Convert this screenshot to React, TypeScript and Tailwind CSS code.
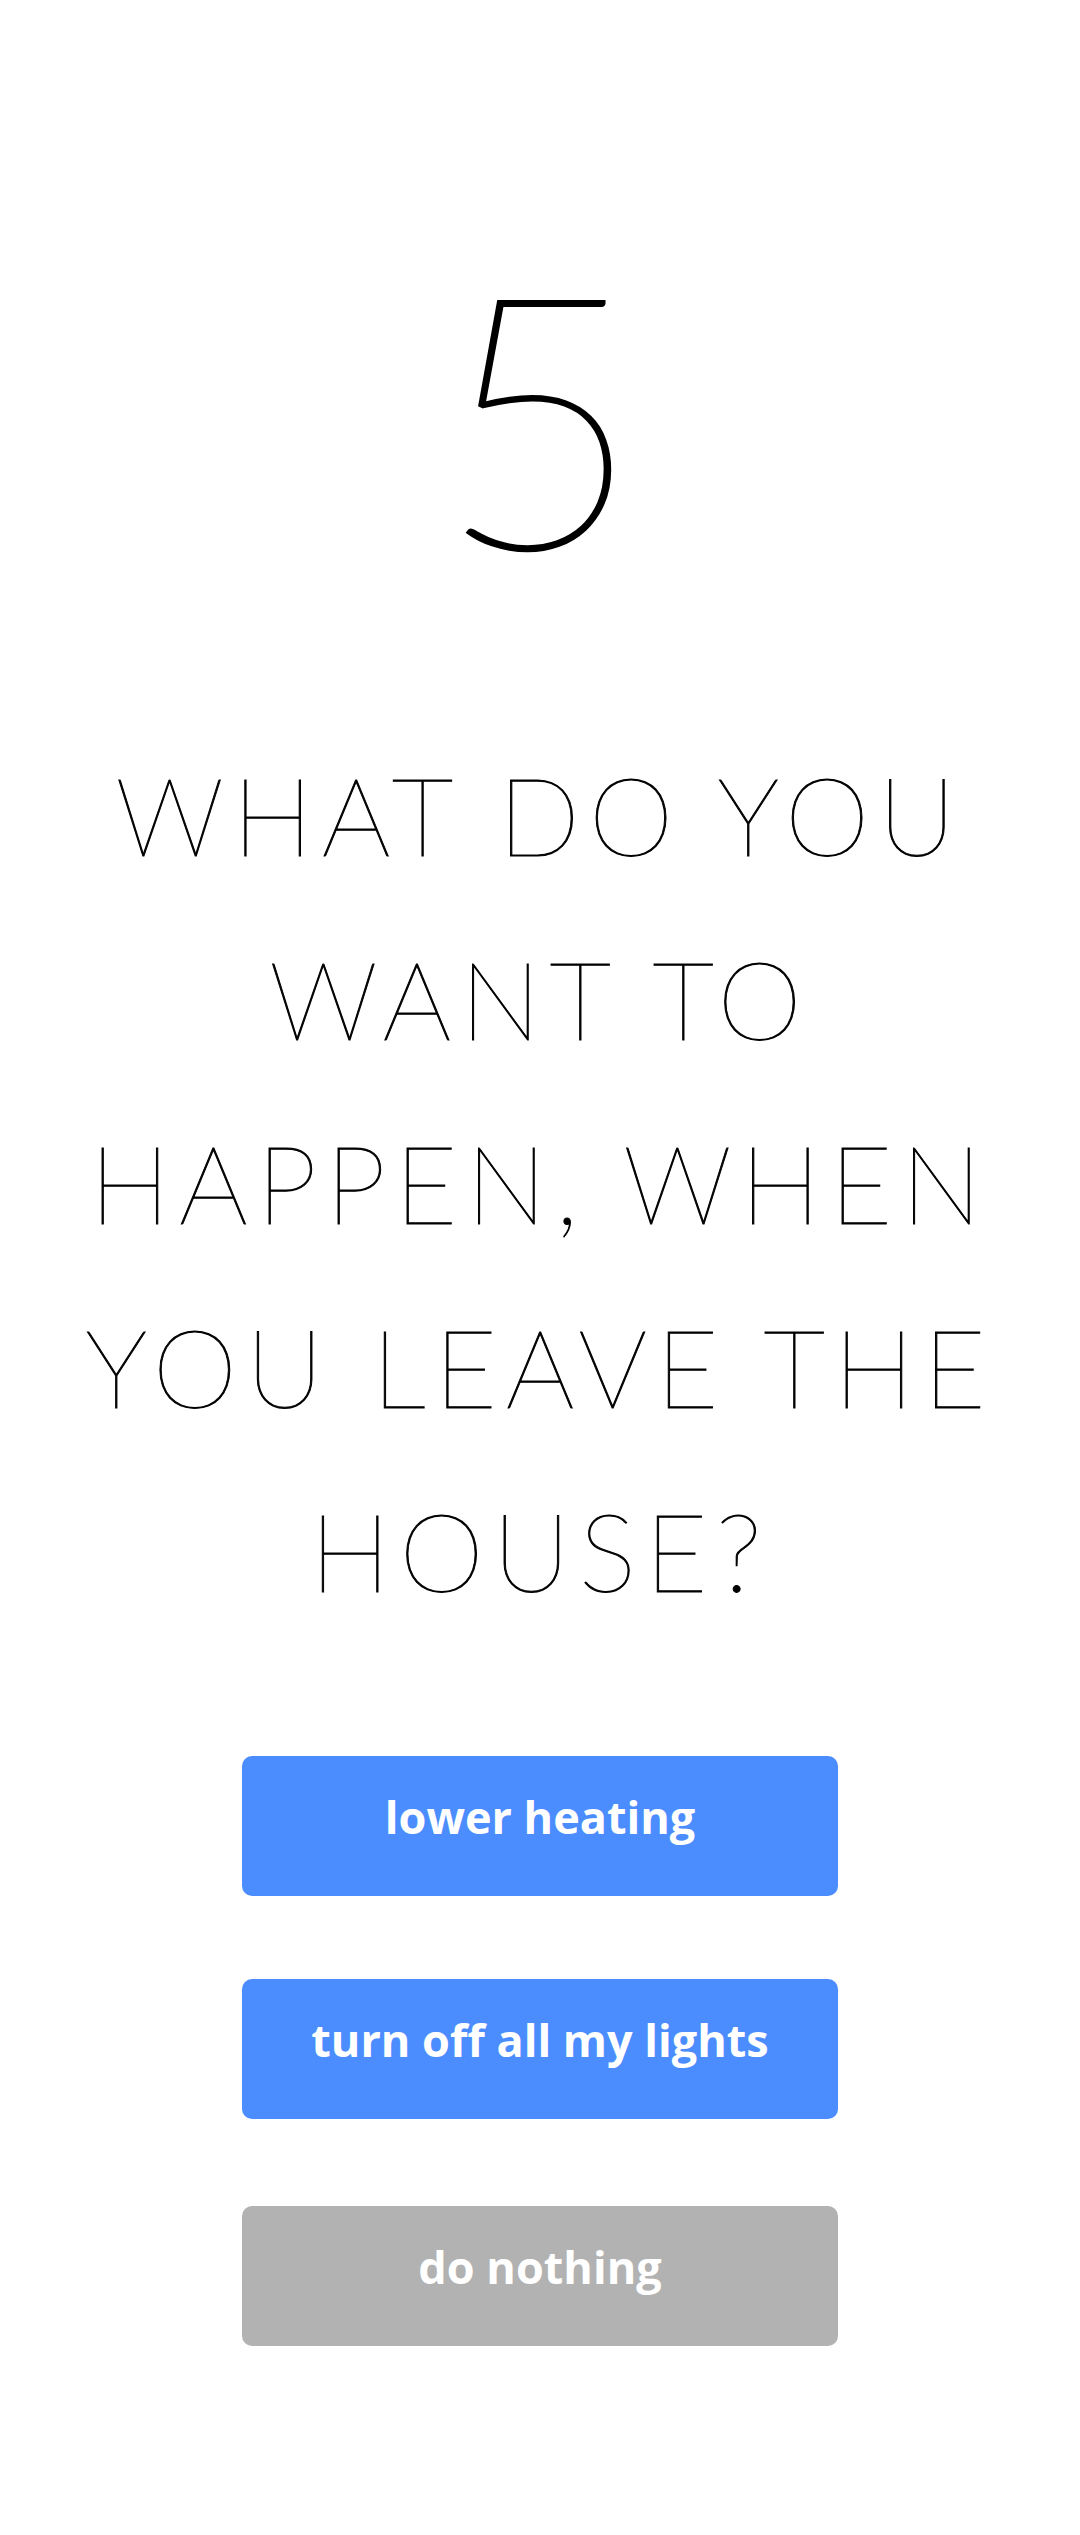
export default function App() {
  return (
    <div className="min-h-[2535px] bg-white flex flex-col items-center">
      <div
        className="pt-[236px] text-[352px] leading-none font-thin text-black [-webkit-text-stroke:3px_black]"
        style={{ fontFamily: "Lato, sans-serif" }}
      >
        5
      </div>

      <h1
        className="mt-[134px] w-[1000px] text-center text-[108px] leading-[184px] font-thin tracking-[0.08em] uppercase text-black [-webkit-text-stroke:1px_black]"
        style={{ fontFamily: "Lato, sans-serif" }}
      >
        What do you want to happen, when you leave the house?
      </h1>

      <div className="mt-[114px] flex flex-col items-center font-['Open_Sans',sans-serif]">
        <button
          type="button"
          className="flex h-[140px] w-[596px] flex-col items-center justify-start rounded-[10px] bg-[#4b8dff] pt-[31px] text-[45px] font-bold leading-[60px] text-white"
        >
          lower heating
        </button>
        <button
          type="button"
          className="mt-[83px] flex h-[140px] w-[596px] flex-col items-center justify-start rounded-[10px] bg-[#4b8dff] pt-[31px] text-[45px] font-bold leading-[60px] text-white"
        >
          turn off all my lights
        </button>
        <button
          type="button"
          className="mt-[87px] flex h-[140px] w-[596px] flex-col items-center justify-start rounded-[10px] bg-[#b2b2b2] pt-[31px] text-[45px] font-bold leading-[60px] text-white"
        >
          do nothing
        </button>
      </div>
    </div>
  );
}
